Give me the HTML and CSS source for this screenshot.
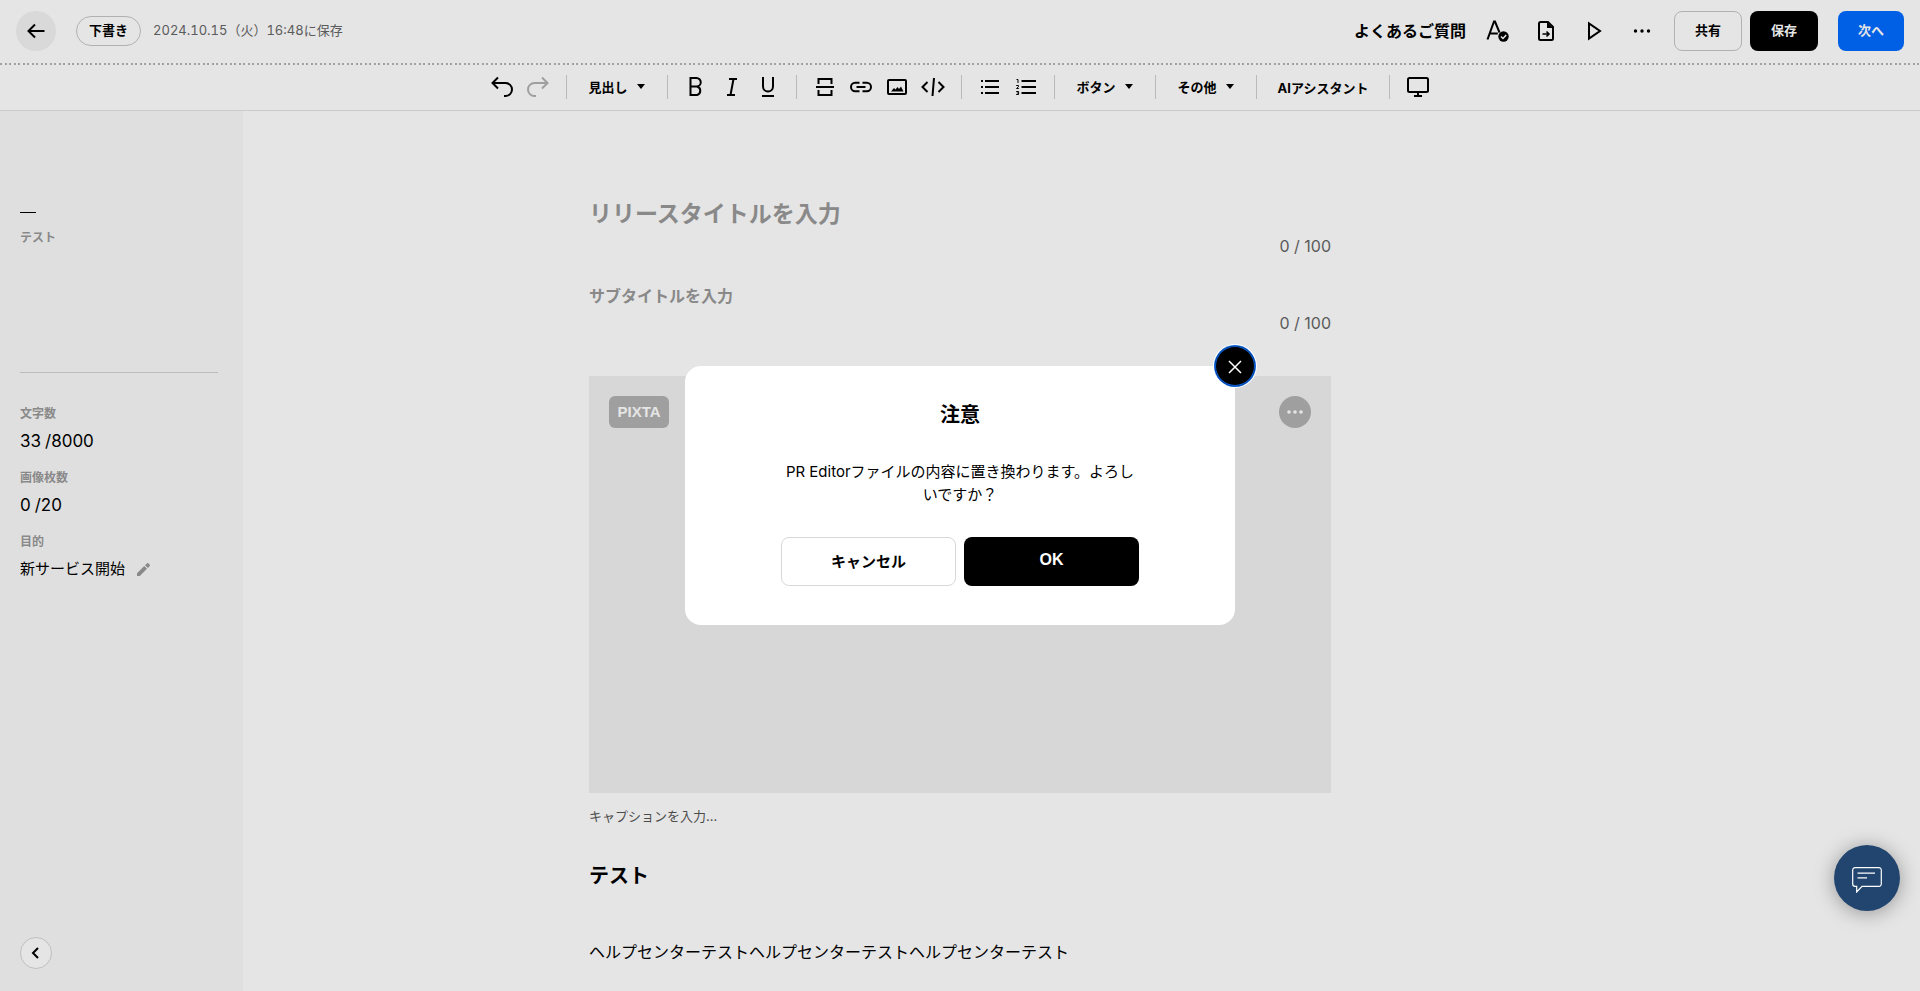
FILE: index.html
```html
<!DOCTYPE html>
<html lang="ja">
<head>
<meta charset="utf-8">
<meta name="viewport" content="width=device-width, initial-scale=1">
<title>リリース編集</title>
<link rel="stylesheet" href="styles.css">
</head>
<body>
<div class="app">
  <header class="header">
    <button class="back" type="button" aria-label="戻る">
      <svg class="icon" viewBox="0 0 24 24"><path d="M20.500 12H4M11 5.500L4.500 12l6.500 6.500"/></svg>
    </button>
    <span class="status">下書き</span>
    <span class="saved">2024.10.15（火）16:48に保存</span>
    <div class="header-actions">
      <a class="faq" href="#">よくあるご質問</a>
      <div class="header-icons">
        <button class="icon-button" type="button" aria-label="校正">
          <svg class="icon" viewBox="0 0 24 24"><path d="M1.500 20.500L8 2.500h1l4.500 11M3.800 14.500h8"/><circle cx="17.500" cy="17.500" r="5.200" class="solid"/><path class="knock" d="M15 17.500l2 2 3.200-3.600"/></svg>
        </button>
        <button class="icon-button" type="button" aria-label="ファイル取り込み">
          <svg class="icon" viewBox="0 0 24 24"><path d="M14 3H6.500A1.500 1.500 0 0 0 5 4.500v15A1.500 1.500 0 0 0 6.500 21h11a1.500 1.500 0 0 0 1.500-1.500V8z"/><path class="solid" d="M13 3v6h6z"/><path class="thin" d="M8.500 15h6M12.500 12.500L15 15l-2.500 2.500"/></svg>
        </button>
        <button class="icon-button" type="button" aria-label="プレビュー">
          <svg class="icon" viewBox="0 0 24 24"><path d="M7 4.500v15L18 12z"/></svg>
        </button>
        <button class="icon-button" type="button" aria-label="その他の操作">
          <svg class="icon" viewBox="0 0 24 24"><g class="solid"><circle cx="5.500" cy="12" r="1.700"/><circle cx="12" cy="12" r="1.700"/><circle cx="18.500" cy="12" r="1.700"/></g></svg>
        </button>
      </div>
      <button class="action outline" type="button">共有</button>
      <button class="action dark" type="button">保存</button>
      <button class="action primary" type="button">次へ</button>
    </div>
  </header>

  <div class="toolbar" role="toolbar" aria-label="書式">
    <div class="tools tools-first">
      <button class="icon-button" type="button" aria-label="元に戻す"><svg class="icon" viewBox="0 0 24 24"><path d="M8 2.500L2.500 8 8 13.500M2.500 8H15.500a6.500 6.500 0 0 1 0 13H14"/></svg></button>
      <button class="icon-button" type="button" aria-label="やり直す" disabled><svg class="icon" viewBox="0 0 24 24"><path d="M16 2.500L21.500 8 16 13.500M21.500 8H8.500a6.500 6.500 0 0 0 0 13H10"/></svg></button>
    </div>
    <div class="menu">
      <button class="menu-button" type="button" aria-haspopup="true">見出し<svg class="caret" viewBox="0 0 8 5"><path d="M0 0h8L4 5z"/></svg></button>
    </div>
    <div class="tools">
      <button class="icon-button" type="button" aria-label="太字"><svg class="icon" viewBox="0 0 24 24"><path d="M6.500 3h6a4.200 4.200 0 0 1 0 8.500h-6zM6.500 11.500H13a4.400 4.400 0 0 1 0 8.500H6.500z"/></svg></button>
      <button class="icon-button" type="button" aria-label="斜体"><svg class="icon" viewBox="0 0 24 24"><path d="M9 4h8M7 20h8M13.500 4l-3 16"/></svg></button>
      <button class="icon-button" type="button" aria-label="下線"><svg class="icon" viewBox="0 0 24 24"><path d="M7 2v9.500a5 5 0 0 0 10 0V2M6 21h12"/></svg></button>
    </div>
    <div class="tools">
      <button class="icon-button" type="button" aria-label="区切り線"><svg class="icon" viewBox="0 0 24 24"><path d="M5.500 9V4h13v5M3 12h18M5.500 15v5h13v-5"/></svg></button>
      <button class="icon-button" type="button" aria-label="リンク"><svg class="icon" viewBox="0 0 24 24"><path d="M10.500 7.800H6.200a4.200 4.200 0 0 0 0 8.400h4.300M13.500 7.800h4.300a4.200 4.200 0 0 1 0 8.400h-4.300M7.500 12h9"/></svg></button>
      <button class="icon-button" type="button" aria-label="画像"><svg class="icon" viewBox="0 0 24 24"><rect x="3" y="5" width="18" height="14" rx="1"/><path class="solid" d="M6 16.500l3-3.500 1.500 1.500 2-2.500 1.500 2 2-2.500 2.500 5z"/></svg></button>
      <button class="icon-button" type="button" aria-label="埋め込み"><svg class="icon" viewBox="0 0 24 24"><path d="M6.500 7L1.500 12l5 5M17.500 7l5 5-5 5M13 3l-1.500 18"/></svg></button>
    </div>
    <div class="tools">
      <button class="icon-button" type="button" aria-label="箇条書き"><svg class="icon" viewBox="0 0 24 24"><path d="M7 6h14M7 12h14M7 18h14M3 6h2M3 12h2M3 18h2"/></svg></button>
      <button class="icon-button" type="button" aria-label="番号付きリスト"><svg class="icon" viewBox="0 0 24 24"><path d="M7.500 6h14.500M7.500 12h14.500M7.500 18h14.500"/><path class="fine" d="M2.500 4.500H4V8M2.200 10.500h2.300v1.200l-2 1.800h2.300M2.200 16.500h2.400v3H2.200M2.800 18h1.800"/></svg></button>
    </div>
    <div class="menu">
      <button class="menu-button" type="button" aria-haspopup="true">ボタン<svg class="caret" viewBox="0 0 8 5"><path d="M0 0h8L4 5z"/></svg></button>
    </div>
    <div class="menu">
      <button class="menu-button" type="button" aria-haspopup="true">その他<svg class="caret" viewBox="0 0 8 5"><path d="M0 0h8L4 5z"/></svg></button>
    </div>
    <div class="menu menu-plain">
      <button class="menu-button" type="button">AIアシスタント</button>
    </div>
    <div class="tools tools-last">
      <button class="icon-button" type="button" aria-label="画面表示"><svg class="icon" viewBox="0 0 24 24"><rect x="2" y="3" width="20" height="14" rx="1.500"/><path d="M12 17v3.500M8 21h8"/></svg></button>
    </div>
  </div>

  <div class="workspace">
    <aside class="sidebar">
      <nav class="outline-nav" aria-label="見出し一覧">
        <a class="outline-link" href="#section">テスト</a>
      </nav>
      <dl class="stats">
        <dt>文字数</dt>
        <dd class="count"><span>33</span><span>/8000</span></dd>
        <dt>画像枚数</dt>
        <dd class="count"><span>0</span><span>/20</span></dd>
        <dt>目的</dt>
        <dd class="purpose">新サービス開始
          <button class="edit" type="button" aria-label="目的を編集"><svg viewBox="0 0 14 14"><path d="M0 14v-3l7.800-7.800 3 3L3 14zM8.700 2.300L10.500.5a1.500 1.500 0 0 1 2 0l1 1a1.500 1.500 0 0 1 0 2l-1.800 1.800z"/></svg></button>
        </dd>
      </dl>
      <button class="collapse" type="button" aria-label="サイドバーを閉じる"><svg viewBox="0 0 12 12"><path d="M8 1L3 6l5 5"/></svg></button>
    </aside>

    <main class="editor">
      <article class="document">
        <input class="title-input" type="text" aria-label="リリースタイトル" placeholder="リリースタイトルを入力">
        <p class="counter">0 / 100</p>
        <input class="subtitle-input" type="text" aria-label="サブタイトル" placeholder="サブタイトルを入力">
        <p class="counter">0 / 100</p>
        <figure class="figure">
          <div class="picture">
            <button class="pixta" type="button">PIXTA</button>
            <button class="more" type="button" aria-label="画像メニュー"><svg viewBox="0 0 16 4"><circle cx="2" cy="2" r="1.800"/><circle cx="8" cy="2" r="1.800"/><circle cx="14" cy="2" r="1.800"/></svg></button>
          </div>
          <input class="caption-input" type="text" aria-label="キャプション" placeholder="キャプションを入力...">
        </figure>
        <h2 class="section-title" id="section">テスト</h2>
        <p class="paragraph">ヘルプセンターテストヘルプセンターテストヘルプセンターテスト</p>
      </article>
    </main>
  </div>
</div>

<div class="overlay">
  <div class="modal" role="dialog" aria-modal="true" aria-labelledby="modal-title">
    <button class="modal-close" type="button" aria-label="閉じる"><svg viewBox="0 0 14 14"><path d="M1 1l12 12M13 1L1 13"/></svg></button>
    <h1 class="modal-title" id="modal-title">注意</h1>
    <p class="modal-text">PR Editorファイルの内容に置き換わります。よろしいですか？</p>
    <div class="modal-actions">
      <button class="modal-button cancel" type="button">キャンセル</button>
      <button class="modal-button ok" type="button">OK</button>
    </div>
  </div>
</div>

<button class="chat" type="button" aria-label="チャット"><svg viewBox="0 0 30 26"><path d="M3 .7h24a2.300 2.300 0 0 1 2.300 2.300v14a2.300 2.300 0 0 1-2.300 2.300H10L4.700 25v-5.700H3A2.300 2.300 0 0 1 .7 17V3A2.300 2.300 0 0 1 3 .7zM5.500 6.200h17.500M5.500 10.800h9.500"/></svg></button>
</body>
</html>
```

FILE: styles.css
```css
* {
  box-sizing: border-box;
}

body {
  margin: 0;
  color: #000;
  background: #fff;
  font-family: Inter, "Noto Sans CJK JP", sans-serif;
  font-size: 16px;
}

button,
input {
  margin: 0;
  padding: 0;
  border: 0;
  background: none;
  color: inherit;
  font: inherit;
}

p,
h1,
h2,
dl,
dd,
figure {
  margin: 0;
}

svg {
  display: block;
}

.app {
  display: flex;
  flex-direction: column;
  min-height: 100vh;
}

/* Icons */
.icon {
  width: 24px;
  height: 24px;
  fill: none;
  stroke: currentColor;
  stroke-width: 2;
}

.icon .solid {
  fill: currentColor;
  stroke: none;
}

.icon .knock {
  stroke: #fff;
  stroke-width: 1.5;
}

.icon .thin {
  stroke-width: 1.6;
}

.icon .fine {
  stroke-width: 1;
}

.icon-button:disabled {
  color: #b2b2b2;
}

/* Header */
.header {
  display: flex;
  align-items: center;
  height: 65px;
  padding: 0 16px 3px;
  background: repeating-linear-gradient(90deg, #b4b4b4 0 2px, transparent 2px 5px, #b4b4b4 5px 7px, transparent 7px 9px) bottom / 100% 2px no-repeat;
}

.back {
  display: grid;
  place-items: center;
  width: 40px;
  height: 40px;
  border-radius: 50%;
  background: #f2f2f2;
}

.status {
  margin-left: 20px;
  padding: 0 12px 2px;
  border: 1px solid #c6c6c6;
  border-radius: 15px;
  font-size: 13px;
  font-weight: 700;
  line-height: 26px;
}

.saved {
  margin-left: 12px;
  padding-bottom: 3px;
  color: #666;
  font-size: 13px;
  font-variant-numeric: tabular-nums;
}

.header-actions {
  display: flex;
  align-items: center;
  margin-left: auto;
}

.faq {
  padding-bottom: 3px;
  color: inherit;
  font-weight: 700;
  text-decoration: none;
}

.header-icons {
  display: flex;
  gap: 24px;
  margin: 0 20px;
}

.action {
  min-width: 66px;
  height: 40px;
  padding: 0 20px 3px;
  border-radius: 8px;
  color: #fff;
  font-size: 13px;
  font-weight: 700;
}

.outline {
  border: 1px solid #c6c6c6;
  color: #000;
}

.dark {
  min-width: 68px;
  margin-left: 8px;
  background: #000;
}

.primary {
  margin-left: 20px;
  background: #006bff;
}

/* Toolbar */
.toolbar {
  display: flex;
  align-items: center;
  justify-content: center;
  height: 46px;
  padding-bottom: 1px;
  border-bottom: 1px solid #e2e2e2;
}

.tools,
.menu {
  display: flex;
  align-items: center;
  height: 24px;
  border-left: 1px solid #d0d0d0;
}

.tools {
  gap: 12px;
  padding: 0 16px;
}

.tools-first {
  padding-left: 0;
  border-left: 0;
}

.tools-last {
  padding-right: 0;
}

.menu {
  padding: 0 22px 2px;
}

.menu-plain {
  padding: 0 21px;
}

.menu-button {
  display: flex;
  align-items: center;
  gap: 9px;
  font-size: 13px;
  font-weight: 700;
}

.caret {
  width: 8px;
  height: 5px;
}

/* Sidebar */
.workspace {
  display: grid;
  flex: 1;
  grid-template-columns: 243px 1fr 243px;
}

.sidebar {
  display: flex;
  flex-direction: column;
  padding: 101px 25px 22px 20px;
  background: #f9f9f9;
}

.outline-nav {
  min-height: 161px;
  border-bottom: 1px solid #d2d2d2;
}

.outline-nav::before {
  content: "";
  display: block;
  width: 16px;
  height: 1px;
  margin-bottom: 16px;
  background: #000;
}

.outline-link {
  display: block;
  color: #999;
  font-size: 12px;
  font-weight: 700;
  line-height: 18px;
  text-decoration: none;
}

.stats {
  margin-top: 32px;
}

.stats dt {
  margin-bottom: 4px;
  color: #999;
  font-size: 12px;
  font-weight: 700;
  line-height: 18px;
}

.stats dd {
  display: flex;
  align-items: center;
  margin-bottom: 14px;
  line-height: 28px;
}

.count {
  gap: 4px;
  font-size: 17px;
}

.purpose {
  gap: 12px;
  font-size: 15px;
}

.edit svg {
  width: 13px;
  height: 13px;
  fill: #999;
}

.collapse {
  display: grid;
  place-items: center;
  width: 32px;
  height: 32px;
  margin-top: auto;
  border: 1px solid #d6d6d6;
  border-radius: 50%;
  background: #fff;
}

.collapse svg {
  width: 12px;
  height: 12px;
  fill: none;
  stroke: #000;
  stroke-width: 2;
}

/* Document */
.document {
  max-width: 742px;
  margin: 0 auto;
  padding-top: 84px;
}

.title-input,
.subtitle-input,
.caption-input {
  display: block;
  width: 100%;
}

.title-input {
  height: 38px;
  font-size: 23px;
  font-weight: 700;
}

.subtitle-input {
  height: 28px;
  margin-top: 23px;
  font-weight: 700;
}

.title-input::placeholder,
.subtitle-input::placeholder {
  color: #999;
}

.counter {
  color: #666;
  line-height: 26px;
  text-align: right;
}

.figure {
  margin-top: 40px;
}

.picture {
  display: flex;
  align-items: flex-start;
  justify-content: space-between;
  aspect-ratio: 16 / 9;
  padding: 20px;
  background: #f0f0f0;
}

.pixta {
  min-width: 60px;
  height: 32px;
  padding: 0 8px 1px;
  border-radius: 6px;
  background: #b2b2b2;
  color: #fff;
  font-family: "Liberation Sans", sans-serif;
  font-size: 15px;
  font-weight: 700;
}

.more {
  display: grid;
  place-items: center;
  width: 32px;
  height: 32px;
  border-radius: 50%;
  background: #b2b2b2;
}

.more svg {
  width: 16px;
  height: 4px;
  fill: #fff;
}

.caption-input {
  height: 20px;
  margin-top: 13px;
  font-size: 13px;
}

.caption-input::placeholder {
  color: #555;
}

.section-title {
  margin-top: 35px;
  font-size: 20px;
  font-weight: 700;
  line-height: 30px;
}

.paragraph {
  margin-top: 47px;
  line-height: 28px;
}

/* Modal */
.overlay {
  position: fixed;
  inset: 0;
  display: grid;
  place-items: center;
  background: rgba(0, 0, 0, 0.1);
}

.modal {
  position: relative;
  width: 550px;
  padding: 34px 96px 39px;
  border-radius: 16px;
  background: #fff;
  text-align: center;
}

.modal-close {
  position: absolute;
  top: -20px;
  right: -20px;
  display: grid;
  place-items: center;
  width: 40px;
  height: 40px;
  padding-top: 2px;
  border-radius: 50%;
  background: #000;
  box-shadow: 0 0 0 1px #0a5fd6, 0 0 0 2px #fff, inset 0 0 0 1px #0a5fd6;
}

.modal-close svg {
  width: 14px;
  height: 14px;
  fill: none;
  stroke: #fff;
  stroke-width: 1.5;
}

.modal-title {
  font-size: 20px;
  font-weight: 700;
  line-height: 30px;
}

.modal-text {
  margin-top: 30px;
  font-size: 15px;
  line-height: 23px;
}

.modal-actions {
  display: grid;
  grid-template-columns: 1fr 1fr;
  gap: 8px;
  margin-top: 31px;
}

.modal-button {
  height: 49px;
  padding-bottom: 3px;
  border-radius: 8px;
  font-size: 15px;
  font-weight: 700;
}

.cancel {
  border: 1px solid #d8d8d8;
}

.ok {
  background: #000;
  color: #fff;
  font-family: "Liberation Sans", sans-serif;
  font-size: 16px;
}

/* Chat launcher */
.chat {
  position: fixed;
  right: 20px;
  bottom: 80px;
  display: grid;
  place-items: center;
  width: 66px;
  height: 66px;
  border-radius: 50%;
  background: #22456f;
  box-shadow: 0 2px 20px rgba(0, 0, 0, 0.35);
}

.chat svg {
  width: 30px;
  height: 26px;
  margin-top: 4px;
  fill: none;
  stroke: #fff;
  stroke-width: 1.2;
}
```
